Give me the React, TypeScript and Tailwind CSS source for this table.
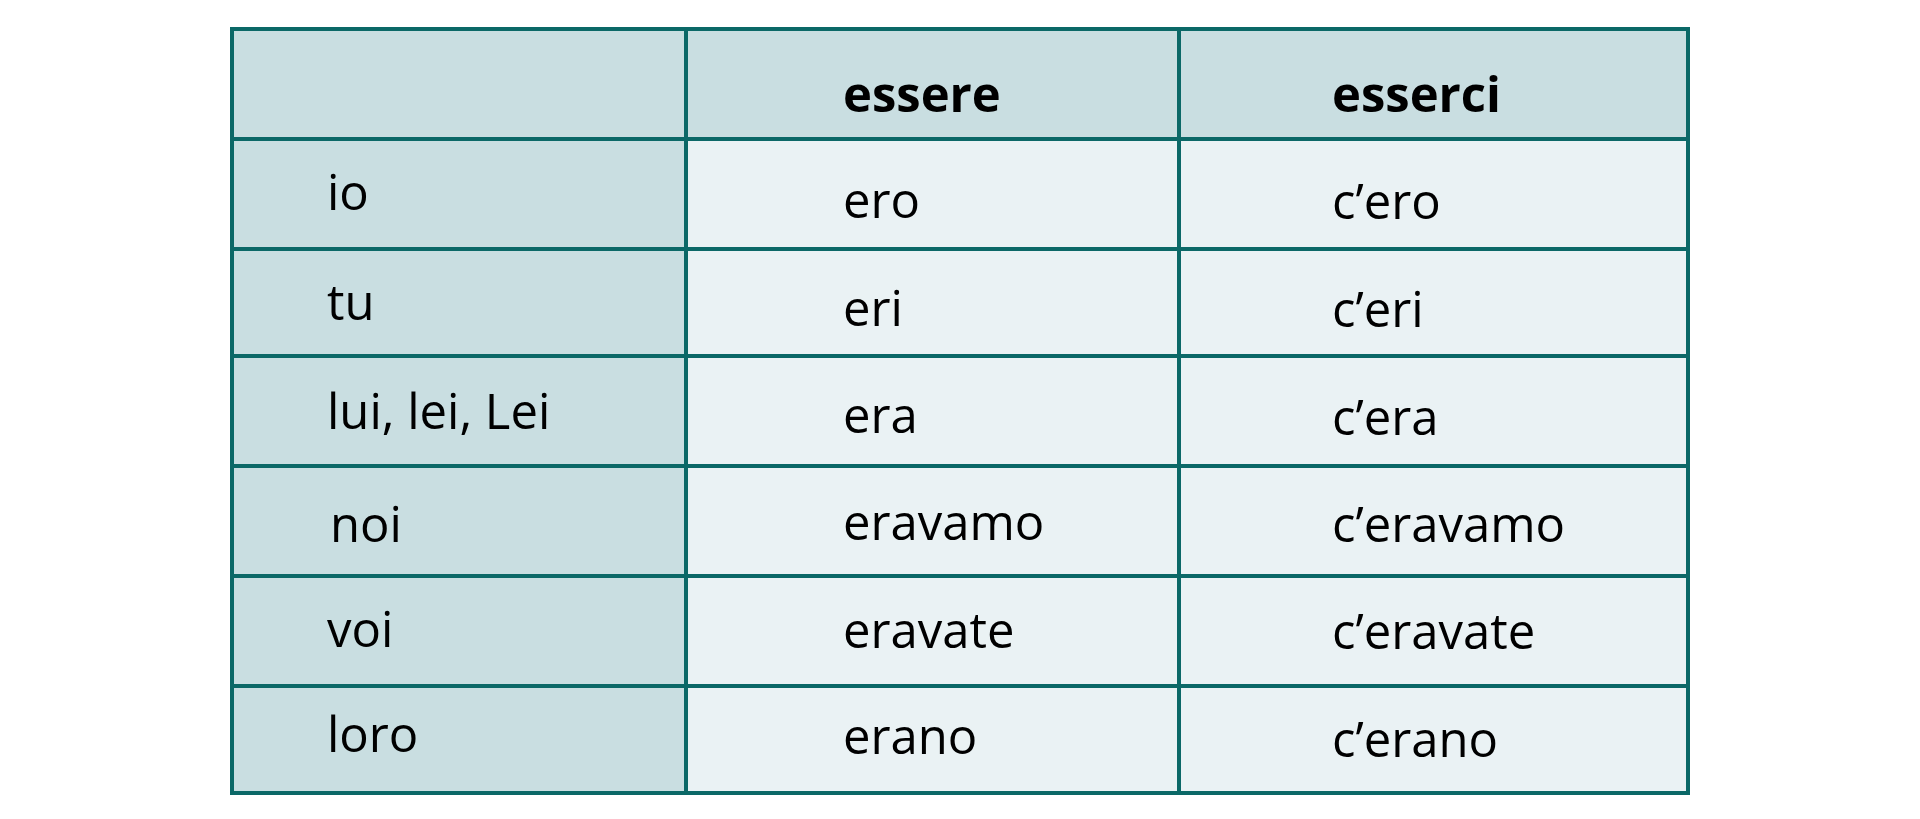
const rows = [
    { p: ["", ""], a: ["essere", "pt-[37px]"], b: ["esserci", "pt-[37px]"], head: true },
    { p: ["io", "pt-[25px]", "pl-[93px]"], a: ["ero", "pt-[33px]"], b: ["c’ero", "pt-[34px]"] },
    { p: ["tu", "pt-[25px]", "pl-[93px]"], a: ["eri", "pt-[31px]"], b: ["c’eri", "pt-[32px]"] },
    { p: ["lui, lei, Lei", "pt-[27px]", "pl-[93px]"], a: ["era", "pt-[31px]"], b: ["c’era", "pt-[33px]"] },
    { p: ["noi", "pt-[30px]", "pl-[96px]"], a: ["eravamo", "pt-[28px]"], b: ["c’eravamo", "pt-[30px]"] },
    { p: ["voi", "pt-[25px]", "pl-[93px]"], a: ["eravate", "pt-[26px]"], b: ["c’eravate", "pt-[27px]"] },
    { p: ["loro", "pt-[20px]", "pl-[93px]"], a: ["erano", "pt-[22px]"], b: ["c’erano", "pt-[25px]"] },
];

export default function App() {
    return (
        <div className="w-full h-[819px] bg-white overflow-hidden font-['Open_Sans',sans-serif] text-black">
            <div className="pt-[27px] pl-[230px]">
                {/* table: teal background shows through gaps as grid lines */}
                <div className="grid w-fit grid-cols-[450px_489px_505px] grid-rows-[106px_106px_103px_106px_106px_106px_103px] gap-[4px] p-[4px] bg-[#0b6867]">
                    {rows.map((r, i) => (
                        <div key={i} className="contents">
                            <div className={`bg-[#c9dee1] ${r.p[2] ?? ""} ${r.p[1]}`}>
                                <span className="block text-[49px] leading-[50px]">{r.p[0]}</span>
                            </div>
                            <div className={`${r.head ? "bg-[#c9dee1] font-bold" : "bg-[#eaf2f4]"} pl-[155px] ${r.a[1]}`}>
                                <span className="block text-[49px] leading-[50px]">{r.a[0]}</span>
                            </div>
                            <div className={`${r.head ? "bg-[#c9dee1] font-bold" : "bg-[#eaf2f4]"} pl-[151px] ${r.b[1]}`}>
                                <span className="block text-[49px] leading-[50px]">{r.b[0]}</span>
                            </div>
                        </div>
                    ))}
                </div>
            </div>
        </div>
    );
}
